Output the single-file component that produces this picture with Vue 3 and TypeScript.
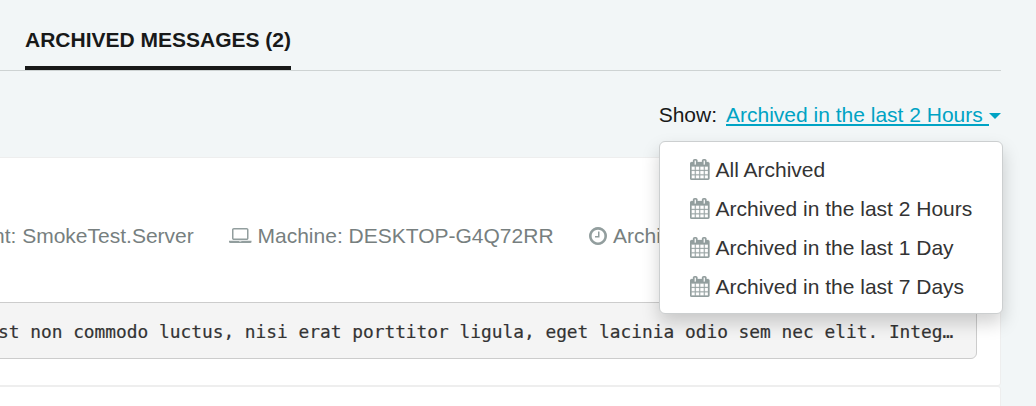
<script setup lang="ts">
interface Icon {
  viewBox: string
  path: string
}

const icons: Record<'calendar' | 'laptop' | 'clock', Icon> = {
  calendar: {
    viewBox: '0 0 1664 1792',
    path: 'M128 1664h288v-288h-288v288zm352 0h320v-288h-320v288zm-352-352h288v-320h-288v320zm352 0h320v-320h-320v320zm-352-384h288v-288h-288v288zm736 736h320v-288h-320v288zm-384-736h320v-288h-320v288zm768 736h288v-288h-288v288zm-384-352h320v-320h-320v320zm-352-864v-288q0-13-9.5-22.5t-22.5-9.5h-64q-13 0-22.5 9.5t-9.5 22.5v288q0 13 9.5 22.5t22.5 9.5h64q13 0 22.5-9.5t9.5-22.5zm736 864h288v-320h-288v320zm-384-384h320v-288h-320v288zm384 0h288v-288h-288v288zm32-480v-288q0-13-9.5-22.5t-22.5-9.5h-64q-13 0-22.5 9.5t-9.5 22.5v288q0 13 9.5 22.5t22.5 9.5h64q13 0 22.5-9.5t9.5-22.5zm384-64v1280q0 52-38 90t-90 38h-1408q-52 0-90-38t-38-90v-1280q0-52 38-90t90-38h128v-96q0-66 47-113t113-47h64q66 0 113 47t47 113v96h384v-96q0-66 47-113t113-47h64q66 0 113 47t47 113v96h128q52 0 90 38t38 90z',
  },
  laptop: {
    viewBox: '0 256 1920 1280',
    path: 'M416 1280q-66 0-113-47t-47-113v-704q0-66 47-113t113-47h1088q66 0 113 47t47 113v704q0 66-47 113t-113 47h-1088zm-32-864v704q0 13 9.5 22.5t22.5 9.5h1088q13 0 22.5-9.5t9.5-22.5v-704q0-13-9.5-22.5t-22.5-9.5h-1088q-13 0-22.5 9.5t-9.5 22.5zm1376 928h160v96q0 40-47 68t-113 28h-1600q-66 0-113-28t-47-68v-96h1760zm-720 96q16 0 16-16t-16-16h-160q-16 0-16 16t16 16h160z',
  },
  clock: {
    viewBox: '128 128 1536 1536',
    path: 'M1024 544v448q0 14-9 23t-23 9h-320q-14 0-23-9t-9-23v-64q0-14 9-23t23-9h224v-352q0-14 9-23t23-9h64q14 0 23 9t9 23zm416 352q0-148-73-273t-198-198-273-73-273 73-198 198-73 273 73 273 198 198 273 73 273-73 198-198 73-273zm224 0q0 209-103 385.5t-279.5 279.5-385.5 103-385.5-103-279.5-279.5-103-385.5 103-385.5 279.5-279.5 385.5-103 385.5 103 279.5 279.5 103 385.5z',
  },
}

const periods: string[] = [
  'All Archived',
  'Archived in the last 2 Hours',
  'Archived in the last 1 Day',
  'Archived in the last 7 Days',
]
</script>

<template>
  <div class="page">
    <nav class="tabs"><a class="tab">ARCHIVED MESSAGES (2)</a></nav>

    <div class="toolbar">
      <span class="label">Show:</span>
      <div class="dropdown">
        <a class="toggle"><span class="current">Archived in the last 2 Hours&nbsp;</span><span class="caret"></span></a>
        <ul class="menu">
          <li v-for="period in periods" :key="period" class="option">
            <svg class="calendar" :viewBox="icons.calendar.viewBox"><path :d="icons.calendar.path" /></svg>
            <span>{{ period }}</span>
          </li>
        </ul>
      </div>
    </div>

    <section class="message">
      <div class="meta">
        <span class="endpoint">nt: SmokeTest.Server</span>
        <span class="machine">
          <svg class="laptop" :viewBox="icons.laptop.viewBox"><path :d="icons.laptop.path" /></svg>
          <span>Machine: DESKTOP-G4Q72RR</span>
        </span>
        <span class="archived">
          <svg class="clock" :viewBox="icons.clock.viewBox"><path :d="icons.clock.path" /></svg>
          <span>Archi</span>
        </span>
      </div>
      <pre class="body">st non commodo luctus, nisi erat porttitor ligula, eget lacinia odio sem nec elit. Integ…</pre>
    </section>
    <section class="message next"></section>
  </div>
</template>

<style>
body {
  margin: 0;
}
</style>

<style scoped>
.page {
  box-sizing: border-box;
  width: 1036px;
  height: 406px;
  padding-right: 35px;
  overflow: hidden;
  background: #f2f6f7;
  color: #181919;
  font: 21px/30px "Liberation Sans", Arial, sans-serif;
  white-space: nowrap;
}
.tabs {
  display: flex;
  box-sizing: border-box;
  height: 71px;
  padding-left: 25px;
  border-bottom: 1px solid #ced3d3;
}
.tab {
  box-sizing: border-box;
  width: 266px;
  height: 70px;
  padding-top: 25px;
  border-bottom: 4px solid #181919;
  font-weight: bold;
}
.toolbar {
  display: flex;
  justify-content: flex-end;
  box-sizing: border-box;
  height: 86px;
  padding-top: 29px;
}
.label {
  margin-right: 9px;
}
.dropdown {
  position: relative;
  width: 275px;
}
.toggle {
  display: flex;
  align-items: flex-start;
  height: 30px;
  color: #00a3c4;
}
.current {
  box-sizing: border-box;
  width: 263px;
  height: 26px;
  border-bottom: 2px solid #00a3c4;
}
.caret {
  margin-top: 13px;
  border: 6px solid transparent;
  border-top-color: #00a3c4;
  border-bottom: 0;
}
.menu {
  position: absolute;
  z-index: 1;
  top: 41px;
  left: -67px;
  box-sizing: border-box;
  width: 344px;
  height: 173px;
  margin: 0;
  padding: 8px 0 0 30px;
  list-style: none;
  border: 1px solid #cccfd0;
  border-radius: 6px;
  background: #fff;
  box-shadow: 0 9px 18px rgba(0, 0, 0, 0.18);
  color: #333;
}
.option {
  display: flex;
  align-items: center;
  gap: 6px;
  height: 39px;
}
svg {
  flex: none;
  fill: #929e9e;
}
.calendar {
  width: 19.5px;
  height: 21px;
  stroke: #929e9e;
  stroke-width: 24px;
}
.message {
  box-sizing: border-box;
  height: 229px;
  margin-left: -12px;
  padding: 63px 23px 0 0;
  border: 1px solid #eee;
  border-radius: 3px;
  background: #fff;
}
.meta {
  display: flex;
  height: 30px;
  padding-left: 4px;
  color: #777f7f;
}
.endpoint {
  width: 236px;
}
.machine,
.archived {
  display: flex;
  align-items: center;
  gap: 6px;
}
.machine {
  width: 360px;
}
.laptop {
  width: 22.5px;
  height: 15px;
  margin-bottom: 2px;
}
.clock {
  width: 18px;
  height: 18px;
  margin-bottom: 1px;
}
.body {
  box-sizing: border-box;
  height: 57px;
  margin: 51px 0 0;
  padding: 0 0 0 8px;
  overflow: hidden;
  border: 1px solid #ccc;
  border-radius: 6px;
  background: #f4f4f4;
  color: #333;
  font: 17.83px/58px "DejaVu Sans Mono", Consolas, monospace;
  -webkit-text-stroke: 0.2px #333;
}
</style>
